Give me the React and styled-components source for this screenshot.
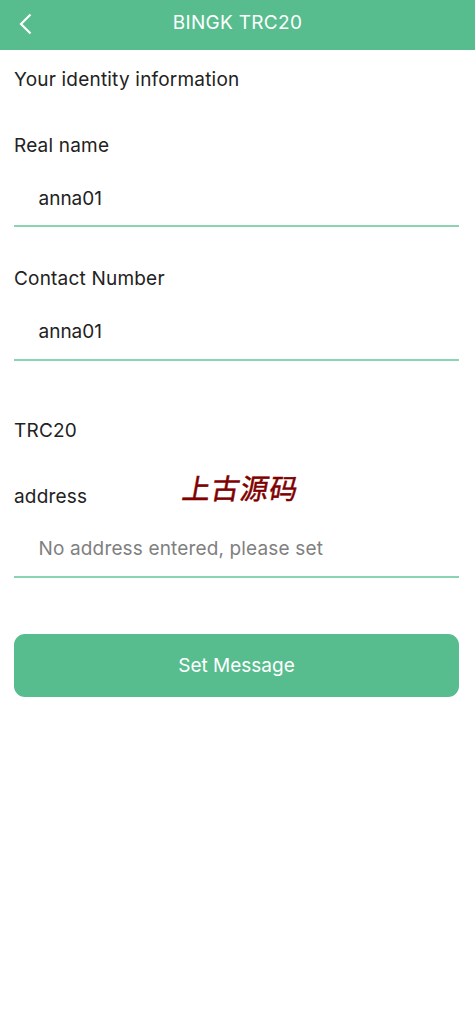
import React from "react";
import styled, { createGlobalStyle } from "styled-components";

const Global = createGlobalStyle`
  html, body { margin: 0; padding: 0; background: #fff; }
  body { font-family: Inter, "Liberation Sans", Arial, sans-serif; }
`;
const Page = styled.div`
  position: relative;
  width: 475px;
  height: 1024px;
  background: #fff;
  overflow: hidden;
`;
const Header = styled.header`
  height: 50px;
  background: #57bd8e;
  display: grid;
  grid-template-columns: 50px 1fr 50px;
  align-items: center;
  color: #fff;
  padding-bottom: 4px;
  box-sizing: border-box;
`;
const Back = styled.div`
  display: flex;
  justify-content: center;
  padding-top: 1px;
`;
const Title = styled.h1`
  margin: 0;
  text-align: center;
  font-size: 19px;
  font-weight: 400;
  line-height: 24px;
  letter-spacing: 0.3px;
`;
const Content = styled.main`
  padding: 0 16px 0 14px;
  display: flex;
  flex-direction: column;
`;
const Heading = styled.div`
  font-size: 19px;
  line-height: 24px;
  letter-spacing: 0.2px;
  color: #222;
  margin-top: ${(p) => p.$top}px;
`;
const Value = styled.div`
  font-size: 19px;
  line-height: 24px;
  letter-spacing: ${(p) => (p.$muted ? "0.15px" : "0")};
  color: ${(p) => (p.$muted ? "#808080" : "#222")};
  padding: ${(p) => p.$top}px 0 ${(p) => p.$bottom}px 24.5px;
  border-bottom: 2px solid #8bd4b2;
`;
const Submit = styled.button`
  margin-top: 56px;
  height: 63px;
  border: 0;
  border-radius: 11px;
  background: #57bd8e;
  color: #fff;
  font: inherit;
  font-size: 19px;
  padding: 0 0 1px;
  width: 445px;
`;
const Mark = styled.div`
  position: absolute;
  left: 183px;
  top: 468px;
  color: #800000;
  font-family: "Noto Sans CJK SC", sans-serif;
  font-size: 28px;
  line-height: 38px;
  font-weight: 400;
  -webkit-text-stroke: 0.5px #800000;
  letter-spacing: 1px;
  transform: skewX(-10deg);
`;

export default function App() {
  return (
    <Page>
      <Global />
      <Header>
        <Back>
          <svg width="14" height="22" viewBox="0 0 14 22" fill="none">
            <path d="M12.5 1.5 L3 11 L12.5 20.5" stroke="#fff" strokeWidth="2.2" />
          </svg>
        </Back>
        <Title>BINGK TRC20</Title>
        <span />
      </Header>
      <Content>
        <Heading $top={18}>Your identity information</Heading>
        <Heading $top={42}>Real name</Heading>
        <Value $top={29} $bottom={14}>anna01</Value>
        <Heading $top={40}>Contact Number</Heading>
        <Value $top={29} $bottom={15}>anna01</Value>
        <Heading $top={58}>TRC20</Heading>
        <Heading $top={42}>address</Heading>
        <Value $top={28} $bottom={15} $muted>No address entered, please set</Value>
        <Submit>Set Message</Submit>
      </Content>
      <Mark>上古源码</Mark>
    </Page>
  );
}
